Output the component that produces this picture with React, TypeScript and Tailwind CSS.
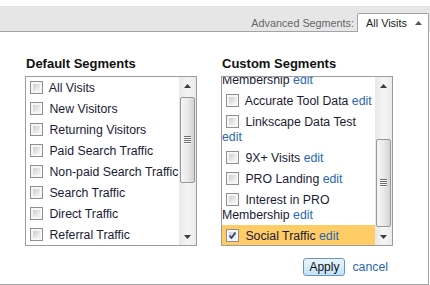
import React from "react";

type Item = { label: string; wrap?: string; edit?: boolean; checked?: boolean; active?: boolean };

const defaultSegments: Item[] = [
  { label: "All Visits" },
  { label: "New Visitors" },
  { label: "Returning Visitors" },
  { label: "Paid Search Traffic" },
  { label: "Non-paid Search Traffic" },
  { label: "Search Traffic" },
  { label: "Direct Traffic" },
  { label: "Referral Traffic" },
];

const customSegments: Item[] = [
  { label: "Accurate Tool Data", edit: true },
  { label: "Linkscape Data Test", wrap: "", edit: true },
  { label: "9X+ Visits", edit: true },
  { label: "PRO Landing", edit: true },
  { label: "Interest in PRO", wrap: "Membership", edit: true },
  { label: "Social Traffic", edit: true, checked: true, active: true },
];

const Checkbox = ({ checked }: { checked?: boolean }) => (
  <span className="inline-block align-[-2px] ml-[4px] mr-[3px] w-[13px] h-[13px] border border-[#8e8f8f] bg-[#f6f6f6] p-[2px] relative">
    <span
      className={
        checked
          ? "block w-full h-full bg-gradient-to-br from-[#c9d3e2] to-[#eef2f8]"
          : "block w-full h-full bg-gradient-to-br from-[#cfcfcf] to-[#f7f7f7]"
      }
    />
    {checked && (
      <svg className="absolute left-[1px] top-[1px]" width="9" height="9" viewBox="0 0 9 9">
        <path d="M1.5 4.5 L3.5 7 L7.5 1.5" fill="none" stroke="#2b3a6b" strokeWidth="1.6" />
      </svg>
    )}
  </span>
);

const Row = ({ item }: { item: Item }) => (
  <div
    className={
      item.active
        ? "whitespace-nowrap pt-[4px] pb-[2px] leading-[15px] bg-[#ffcc66]"
        : "whitespace-nowrap pt-[4px] pb-[2px] leading-[15px]"
    }
  >
    <Checkbox checked={item.checked} /> {item.label}
    {item.wrap !== undefined ? (
      <>
        <br />
        {item.wrap}
        {item.wrap && " "}
      </>
    ) : (
      " "
    )}
    {item.edit && <span className="text-[#2a68b5]">edit</span>}
  </div>
);

const Scrollbar = ({ thumb }: { thumb: string }) => (
  <div className="w-[17px] shrink-0 flex flex-col bg-gradient-to-r from-[#e8e8e8] via-[#f5f5f5] to-[#ebebeb]">
    <div className="h-[17px] flex items-center justify-center">
      <svg width="7" height="4" viewBox="0 0 7 4">
        <path d="M0 4 L3.5 0 L7 4 Z" fill="#3c3c3c" />
      </svg>
    </div>
    <div className="flex-1 pl-[1px] pr-[1px]">
      <div
        className={
          thumb +
          " rounded-[2px] border border-[#979797] bg-gradient-to-r from-[#f6f6f6] via-[#e9e9e9] to-[#d4d4d4] flex items-center justify-center"
        }
      >
        <svg width="7" height="8" viewBox="0 0 7 8">
          <path d="M0 0.5 H7 M0 2.5 H7 M0 4.5 H7 M0 6.5 H7" stroke="#6e6e6e" strokeWidth="1" />
          <path d="M0 1.5 H7 M0 3.5 H7 M0 5.5 H7 M0 7.5 H7" stroke="#fafafa" strokeWidth="1" />
        </svg>
      </div>
    </div>
    <div className="h-[17px] flex items-center justify-center">
      <svg width="7" height="4" viewBox="0 0 7 4">
        <path d="M0 0 L3.5 4 L7 0 Z" fill="#3c3c3c" />
      </svg>
    </div>
  </div>
);

export default function App() {
  return (
    <div className="w-[430px] h-[285px] bg-white overflow-hidden font-['Liberation_Sans',Arial,sans-serif]">
      <div className="pt-[6px]">
        <div className="h-[26px] bg-[#e6e6e6] flex items-end">
          <div className="flex-1 h-full border-b border-[#a3a3a3] flex items-end justify-end pr-[3px] pb-[1px] text-[10.8px] leading-[14px] text-[#666]">
            Advanced Segments:
          </div>
          <div className="w-[72px] h-[19px] mr-[1px] bg-white border-l border-t border-r border-[#a3a3a3] rounded-t-[2px] flex items-center justify-between pl-[8px] pr-[6px] text-[10.9px] text-[#222]">
            <span>All Visits</span>
            <svg width="7" height="4" viewBox="0 0 7 4">
              <path d="M0 4 L3.5 0 L7 4 Z" fill="#555" />
            </svg>
          </div>
        </div>
      </div>

      <div className="w-[429px] h-[253px] border-r border-b border-[#a3a3a3] flex gap-[24px] pl-[25px] pt-[24px] text-[12.3px] text-[#1b1b35]">
        <div className="w-[172px]">
          <h3 className="h-[16px] leading-[16px] mb-[4px] pl-[1px] text-[13px] font-bold text-[#111]">
            Default Segments
          </h3>
          <div className="h-[170px] border border-[#9c9c9c] flex">
            <div className="flex-1 overflow-hidden">
              {defaultSegments.map((s) => (
                <Row key={s.label} item={s} />
              ))}
            </div>
            <Scrollbar thumb="mt-[3px] h-[86px]" />
          </div>
        </div>

        <div className="w-[172px]">
          <h3 className="h-[16px] leading-[16px] mb-[4px] pl-[1px] text-[13px] font-bold text-[#111]">
            Custom Segments
          </h3>
          <div className="h-[170px] border border-[#9c9c9c] flex">
            <div className="flex-1 overflow-hidden">
              {/* list is scrolled: only the tail of the previous entry shows */}
              <div className="-mt-[4px] pb-[2px] leading-[15px] whitespace-nowrap">
                Membership <span className="text-[#2a68b5]">edit</span>
              </div>
              {customSegments.map((s) => (
                <Row key={s.label} item={s} />
              ))}
            </div>
            <Scrollbar thumb="mt-[45px] h-[88px]" />
          </div>
          <div className="mt-[12px] flex items-center justify-end gap-[7px] pr-[5px]">
            <button className="w-[42px] h-[18px] border border-[#6f93c2] rounded-[3px] bg-gradient-to-b from-[#eaf6fd] to-[#bfe3f8] text-[12px] leading-none text-[#111]">
              Apply
            </button>
            <span className="text-[#2a68b5]">cancel</span>
          </div>
        </div>
      </div>
    </div>
  );
}
